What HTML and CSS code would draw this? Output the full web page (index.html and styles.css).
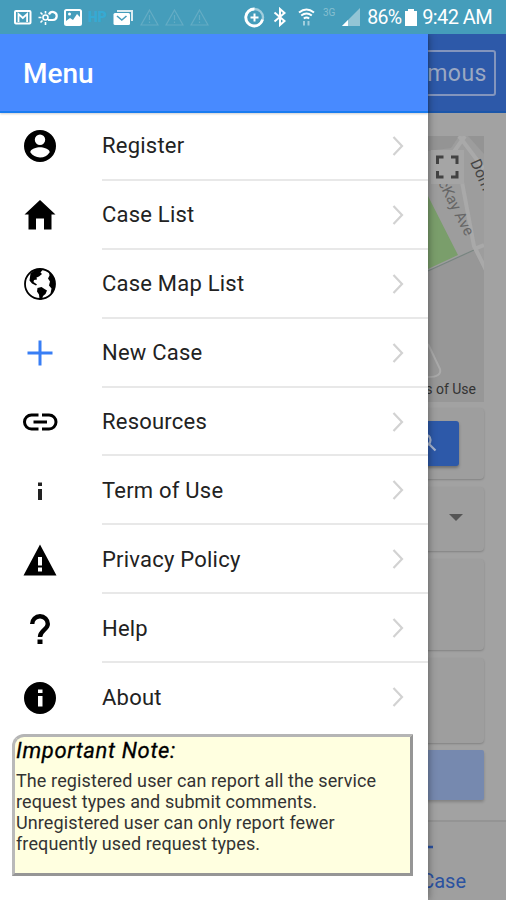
FILE: index.html
```
<!DOCTYPE html>
<html lang="en">
<head>
    <meta charset="UTF-8">
    <meta name="viewport" content="width=device-width, initial-scale=1.0">
    <title>Menu</title>
    <link rel="stylesheet" href="styles.css">
</head>
<body>
    <div class="status-bar">
        <div class="status-left">
            <svg width="18" height="15" viewBox="0 0 18 15"><rect x="1" y="1" width="15.500" height="12.500" rx="1" fill="none" stroke="#fff" stroke-width="2"/><path d="M4.500 12V4l4.300 4 4.300-4v8" fill="none" stroke="#fff" stroke-width="1.800"/></svg>
            <svg width="20" height="17" viewBox="0 0 20 17" fill="none" stroke="#fff" stroke-width="1.600"><circle cx="7.500" cy="8.500" r="2.500"/><path d="M7.500 2v2.500M7.500 13v3M0.500 8.500h3M2.500 3.500l2 2M2.500 13.500l2-2"/><path d="M10 11h5a4 4 0 1 0-4-5.500" stroke-width="2.200"/></svg>
            <svg width="18" height="17" viewBox="0 0 18 17"><rect x="1" y="1" width="16" height="15" rx="1.500" fill="none" stroke="#fff" stroke-width="2"/><path d="M2 12l4-3 3 2 4-6 3 3v7H2z" fill="#fff"/><circle cx="5.500" cy="5" r="1.500" fill="#fff"/></svg>
            <span class="status-hp">HP</span>
            <svg width="21" height="17" viewBox="0 0 21 17"><path d="M4 3V1h16v11h-2V3z" fill="#dcecf1"/><rect x="0.500" y="4" width="16.500" height="12" rx="1.500" fill="#fff"/><path d="M4 7l4.800 4L13.500 7" fill="none" stroke="#459dbb" stroke-width="1.600"/></svg>
            <svg class="warn" width="19" height="17" viewBox="0 0 19 17"><path d="M9.500 1L18 16H1zM9.500 6v5M9.500 12.500v1.500"/></svg>
            <svg class="warn" width="19" height="17" viewBox="0 0 19 17"><path d="M9.500 1L18 16H1zM9.500 6v5M9.500 12.500v1.500"/></svg>
            <svg class="warn" width="19" height="17" viewBox="0 0 19 17"><path d="M9.500 1L18 16H1zM9.500 6v5M9.500 12.500v1.500"/></svg>
        </div>
        <div class="status-right">
            <svg width="21" height="21" viewBox="0 0 21 21" fill="none" stroke="#fff"><circle cx="10.500" cy="10.500" r="8.500" stroke-width="2.400" opacity=".5"/><path d="M10.500 2a8.500 8.500 0 1 0 8 10.500" stroke-width="2.800"/><path d="M10.500 6.500v8M6.500 10.500h8" stroke-width="2"/></svg>
            <svg class="bluetooth" width="14" height="20" viewBox="0 0 14 20"><path d="M1.500 5.500l10 8.500L7 18V2l4.500 4-10 8.500" fill="none" stroke="#fff" stroke-width="2"/></svg>
            <svg class="wifi" width="17" height="19" viewBox="0 0 17 19" fill="none" stroke="#fff"><path d="M1 4.500q7.500-6 15 0M3.200 7.500q5.300-4 10.600 0M5.800 10.500q2.700-2 5.400 0" stroke-width="2"/><path d="M6 13v4.500M10.500 13v4.500" stroke-width="2" opacity=".5"/></svg>
            <span class="network">3G</span>
            <svg class="signal" width="18" height="18" viewBox="0 0 18 18"><path d="M18 0v18H0z" fill="#93c5d5"/><path d="M6 12v6H0z" fill="#fff"/></svg>
            <span class="percent">86%</span>
            <svg class="battery" width="12" height="17" viewBox="0 0 12 17"><path d="M3 0h6v2h3v15H0V2h3z" fill="#fff"/></svg>
            <span class="time">9:42 AM</span>
        </div>
    </div>

    <div class="app">
        <div class="page">
            <div class="page-header">
                <button class="user-button">Anonymous</button>
            </div>
            <div class="page-content">
                <svg class="map" width="462" height="266" viewBox="22 136 462 266">
                    <rect x="22" y="136" width="462" height="266" fill="#9d9d9d"/>
                    <path d="M428 136h31l-8 12-23 3z" fill="#949494"/>
                    <path d="M468 136h16v18z" fill="#949494"/>
                    <path d="M428 271l47-21 9 20v132h-56z" fill="#979797"/>
                    <path d="M400 140l30 60 28 55-58 27z" fill="#7a9e6b"/>
                    <path d="M428 271l46-21" stroke="#788581" stroke-width="1.200"/>
                    <path d="M453 153l12-17M459 136l25 33M456 150l18 96 12 24M474 249l10-4" fill="none" stroke="#a9a9a9" stroke-width="4"/>
                    <path d="M428 344l12 25q2 8-12 8" fill="none" stroke="#aaa" stroke-width="2"/>
                    <text class="street" transform="translate(432 171) rotate(63)">McKay Ave</text>
                    <text class="street dark" transform="translate(470 162) rotate(66)">Dom</text>
                    <rect x="431" y="150" width="33" height="34" fill="#a5a5a5"/>
                    <path d="M437.500 164v-7h6M451 157h6v7M457 171v6h-6M443.500 177h-6v-6" fill="none" stroke="#424242" stroke-width="3"/>
                    <text class="terms" x="476" y="394" text-anchor="end">Terms of Use</text>
                </svg>
                <div class="card search-card">
                    <button class="search-button">
                        <svg width="28" height="28" viewBox="0 0 28 28" fill="none" stroke="#a9b6cf" stroke-width="2.200"><circle cx="10" cy="10" r="5.500"/><path d="M14 14l6.500 6.500"/></svg>
                    </button>
                </div>
                <div class="card select-card"><span class="caret"></span></div>
                <div class="card text-card"></div>
                <div class="card photo-card"></div>
                <button class="submit"></button>
            </div>
            <div class="tabs">
                <div class="tab">
                    <svg width="24" height="24" viewBox="0 0 24 24"><path d="M12 1v22M0 12h24" stroke="#2b52a0" stroke-width="2.400"/></svg>
                    <span>New Case</span>
                </div>
            </div>
        </div>

        <div class="menu">
            <div class="menu-header">Menu</div>
            <div class="menu-list">
                <a class="item">
                    <svg class="icon" viewBox="0 0 40 40"><path fill-rule="evenodd" d="M20 4a16 16 0 1 0 0 32 16 16 0 0 0 0-32zm0 4.500a5.200 5.200 0 1 1 0 10.400 5.200 5.200 0 0 1 0-10.400zM20 31.500c-4 0-7.600-2-9.700-5.200 0-3.400 6.400-5 9.700-5s9.700 1.600 9.700 5A11.600 11.600 0 0 1 20 31.500z"/></svg>
                    <span class="label">Register<svg class="arrow" viewBox="0 0 12 20"><path d="M1.500 1l8.500 9-8.500 9"/></svg></span>
                </a>
                <a class="item">
                    <svg class="icon" viewBox="0 0 40 40"><path d="M20 5L4.500 19.500H8.500V34.500h7.500v-11h8v11h7.500v-15h4z"/></svg>
                    <span class="label">Case List<svg class="arrow" viewBox="0 0 12 20"><path d="M1.500 1l8.500 9-8.500 9"/></svg></span>
                </a>
                <a class="item">
                    <svg class="icon" viewBox="0 0 40 40"><circle cx="20" cy="20" r="15" fill="none" stroke="#000" stroke-width="1.800"/><path d="M10.500 9.500l4.500-3.500 5-1.500 2.500 1.500-2 2.500 1.500 1.500-3 2.500-2.500 1 .5 2-3 .5-.5 2 3.500 2.500-1 1-4-2-2.500-3z"/><path d="M17.500 24l4-1 3 2 2.500 1.500-1.500 3.500-2.500 2-1 3.500-2.500-.5-.5-4.500-2-3z"/><path d="M29 8q6.500 5 6 13.500-1 7-4.500 8l1-5-2.500-3 1-4-2-3 1.500-3z"/></svg>
                    <span class="label">Case Map List<svg class="arrow" viewBox="0 0 12 20"><path d="M1.500 1l8.500 9-8.500 9"/></svg></span>
                </a>
                <a class="item">
                    <svg class="icon" viewBox="0 0 40 40"><path d="M20 7.500v25M7.500 20h25" fill="none" stroke="#387ef5" stroke-width="3"/></svg>
                    <span class="label">New Case<svg class="arrow" viewBox="0 0 12 20"><path d="M1.500 1l8.500 9-8.500 9"/></svg></span>
                </a>
                <a class="item">
                    <svg class="icon" viewBox="0 0 40 40"><path d="M18.500 13h-7a7 7 0 0 0 0 14h7M22 13h7a7 7 0 0 1 0 14h-7M13.500 20h13.500" fill="none" stroke="#000" stroke-width="3"/></svg>
                    <span class="label">Resources<svg class="arrow" viewBox="0 0 12 20"><path d="M1.500 1l8.500 9-8.500 9"/></svg></span>
                </a>
                <a class="item">
                    <svg class="icon" viewBox="0 0 40 40"><path fill="#222" d="M18 11.500h4V15h-4zM18 18h4v11h-4z"/></svg>
                    <span class="label">Term of Use<svg class="arrow" viewBox="0 0 12 20"><path d="M1.500 1l8.500 9-8.500 9"/></svg></span>
                </a>
                <a class="item">
                    <svg class="icon" viewBox="0 0 40 40"><path fill-rule="evenodd" d="M20 4.500L3.500 35.500h33zM18 17h4v8.500h-4zm0 10.500h4v4h-4z"/></svg>
                    <span class="label">Privacy Policy<svg class="arrow" viewBox="0 0 12 20"><path d="M1.500 1l8.500 9-8.500 9"/></svg></span>
                </a>
                <a class="item">
                    <svg class="icon" viewBox="0 0 40 40"><path d="M12.200 15a7.800 7.800 0 1 1 15.600 0c0 5.500-7.800 6.500-7.800 13" fill="none" stroke="#000" stroke-width="4.400"/><path d="M17.500 30.500h5v4.500h-5z"/></svg>
                    <span class="label">Help<svg class="arrow" viewBox="0 0 12 20"><path d="M1.500 1l8.500 9-8.500 9"/></svg></span>
                </a>
                <a class="item">
                    <svg class="icon" viewBox="0 0 40 40"><path fill-rule="evenodd" d="M20 4a16 16 0 1 0 0 32 16 16 0 0 0 0-32zM18 11.500h4.500V15H18zM18 18h4.500v10.500H18z"/></svg>
                    <span class="label">About<svg class="arrow" viewBox="0 0 12 20"><path d="M1.500 1l8.500 9-8.500 9"/></svg></span>
                </a>
            </div>
            <div class="note">
                <div class="note-title">Important Note:</div>
                <p>The registered user can report all the service request types and submit comments. Unregistered user can only report fewer frequently used request types.</p>
            </div>
        </div>
    </div>
</body>
</html>
```
FILE: styles.css
```
* {
    box-sizing: border-box;
}

body {
    margin: 0;
    width: 506px;
    height: 900px;
    overflow: hidden;
    font-family: Roboto, sans-serif;
    background-color: #a2a2a2;
}

svg {
    display: block;
    flex: none;
}

button {
    border: none;
    padding: 0;
    font-family: inherit;
}

.status-bar {
    position: relative;
    z-index: 1;
    height: 34px;
    display: flex;
    justify-content: space-between;
    align-items: center;
    padding: 0 14px;
    background-color: #459dbb;
    color: #fff;
}

.status-left,
.status-right {
    display: flex;
    align-items: center;
}

.status-left {
    gap: 6px;
}

.status-hp {
    width: 19px;
    font-size: 14px;
    font-weight: 900;
    color: #36aad3;
}

.warn {
    fill: none;
    stroke: #64acc4;
    stroke-width: 1.2;
}

.bluetooth {
    margin-left: 8px;
}

.wifi {
    margin-left: 11px;
}

.network {
    margin: -9px 0 0 8px;
    font-size: 10px;
    color: #86bfd0;
}

.signal {
    margin-left: 7px;
}

.percent {
    margin-left: 7px;
    font-size: 19.5px;
    letter-spacing: -0.8px;
}

.battery {
    margin: 0 5px 0 4px;
}

.time {
    font-size: 20px;
    letter-spacing: -0.6px;
}

.app {
    position: relative;
    height: 866px;
}

.page {
    height: 866px;
    display: flex;
    flex-direction: column;
}

.page-header {
    height: 79px;
    display: flex;
    justify-content: flex-end;
    align-items: center;
    padding-right: 10px;
    background-color: #2d59a9;
    border-bottom: 2px solid #1b56a9;
}

.user-button {
    height: 46px;
    padding: 2px 7px 0 8px;
    border: 2px solid #8395bd;
    border-radius: 3px;
    background: none;
    color: #9ba8c2;
    font-size: 23px;
    letter-spacing: 0.5px;
}

.page-content {
    flex: 1;
    display: flex;
    flex-direction: column;
    padding: 23px 22px 0;
}

.street {
    font-size: 15px;
    fill: #666;
}

.dark {
    font-size: 15.5px;
    fill: #444;
}

.terms {
    font-size: 14px;
    fill: #333;
}

.card {
    background-color: #9e9e9e;
    border-radius: 4px;
    box-shadow: 0 1px 2px rgba(0, 0, 0, 0.2);
}

.search-card {
    height: 71px;
    margin-top: 6px;
    display: flex;
    justify-content: flex-end;
    padding: 13px 25px 0 0;
}

.search-button {
    width: 60px;
    height: 45px;
    padding-left: 16px;
    border-radius: 3px;
    background-color: #2d59a9;
    box-shadow: 0 2px 3px rgba(0, 0, 0, 0.3);
}

.select-card {
    height: 64px;
    margin-top: 8px;
    display: flex;
    justify-content: flex-end;
    align-items: center;
    padding: 0 21px 4px 0;
}

.caret {
    border: 7px solid transparent;
    border-top-color: #555;
    border-bottom: none;
}

.text-card {
    height: 91px;
    margin-top: 8px;
}

.photo-card {
    height: 85px;
    margin-top: 8px;
}

.submit {
    height: 50px;
    margin-top: 7px;
    border-radius: 2px;
    background-color: #7689af;
    box-shadow: 0 2px 3px rgba(0, 0, 0, 0.2);
}

.tabs {
    height: 80px;
    display: flex;
    justify-content: flex-end;
    padding: 13px 40px 0 0;
    border-top: 2px solid #949494;
    background-color: #9f9f9f;
}

.tab {
    display: flex;
    flex-direction: column;
    align-items: center;
    gap: 10px;
    color: #2b52a0;
    font-size: 20px;
}

.menu {
    position: absolute;
    top: 0;
    left: 0;
    width: 428px;
    height: 866px;
    background-color: #fff;
    box-shadow: 0 0 8px rgba(0, 0, 0, 0.45);
}

.menu-header {
    height: 79px;
    padding-left: 23px;
    line-height: 80px;
    background-color: #488aff;
    border-bottom: 2px solid #1a7cf0;
    box-shadow: 0 1px 2px rgba(0, 0, 0, 0.2);
    color: #fff;
    font-size: 28px;
    font-weight: 500;
}

.menu-list {
    display: flex;
    flex-direction: column;
    margin-top: -1px;
}

.item {
    height: 68.9px;
    display: flex;
    align-items: center;
    padding-left: 20px;
}

.icon {
    width: 40px;
    height: 40px;
}

.label {
    flex: 1;
    height: 100%;
    display: flex;
    align-items: center;
    justify-content: space-between;
    margin-left: 42px;
    padding: 1px 24px 0 0;
    border-bottom: 2px solid #e8e8e8;
    color: #222;
    font-size: 22px;
    letter-spacing: 0.22px;
}

.item:last-child .label {
    border-bottom-color: transparent;
}

.arrow {
    width: 12px;
    height: 20px;
    fill: none;
    stroke: #d2d2d2;
    stroke-width: 2.2;
}

.note {
    width: 401px;
    height: 142px;
    margin: 2px 0 0 12px;
    padding: 3px 1px;
    border: 3px solid;
    border-color: #b5b5b5 #969696 #969696 #b9b9b9;
    border-top-left-radius: 12px;
    background-color: #ffffe0;
    color: #333;
}

.note-title {
    font-size: 22px;
    line-height: 22px;
    font-style: italic;
    letter-spacing: 0.65px;
    color: #000;
    -webkit-text-stroke: 0.3px #000;
}

.note p {
    margin: 8px 0 0;
    font-size: 18px;
    line-height: 21px;
    letter-spacing: 0.11px;
}
```
